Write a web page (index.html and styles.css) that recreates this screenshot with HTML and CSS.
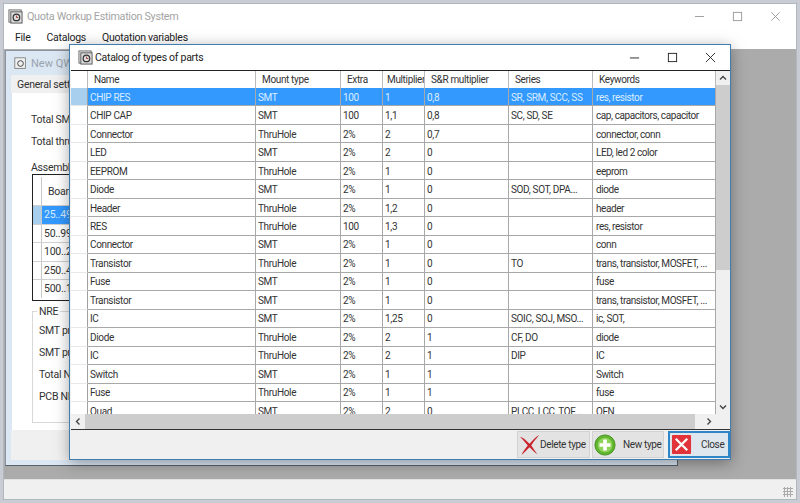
FILE: index.html
```html
<!DOCTYPE html>
<html lang="en">
<head>
<meta charset="utf-8">
<title>Catalog of types of parts</title>
<link rel="stylesheet" href="styles.css">
</head>
<body>
<div class="desktop">
  <section class="main-window">
    <header class="main-title">
      <svg class="app-icon" viewBox="0 0 16 16"><rect x="1" y="1" width="13" height="13" fill="#f0f0f0" stroke="#666"/><rect x="3" y="3" width="12" height="12" fill="#ddd" stroke="#555"/><circle cx="9" cy="9" r="3.5" fill="none" stroke="#333" stroke-width="1.3"/><path d="M9 7v2h2" fill="none" stroke="#a33"/></svg>
      <span class="main-title-text">Quota Workup Estimation System</span>
      <div class="caption-buttons faint">
        <svg viewBox="0 0 12 12"><path d="M1 6h10" stroke="#999" fill="none"/></svg>
        <svg viewBox="0 0 12 12"><rect x="1.5" y="1.5" width="9" height="9" stroke="#999" fill="none"/></svg>
        <svg viewBox="0 0 12 12"><path d="M1.5 1.5l9 9M10.5 1.5l-9 9" stroke="#999" fill="none"/></svg>
      </div>
    </header>
    <nav class="menu"><span>File</span><span>Catalogs</span><span>Quotation variables</span></nav>
    <div class="mdi">
      <section class="child-window">
        <div class="child-title">
          <svg class="app-icon small" viewBox="0 0 16 16"><rect x="1" y="1" width="13" height="13" fill="#f0f0f0" stroke="#777"/><circle cx="8" cy="8" r="3.5" fill="none" stroke="#444" stroke-width="1.2"/></svg>
          <span>New QW</span>
        </div>
        <div class="child-tabs"><span class="tab">General settings</span></div>
        <div class="child-body">
          <p class="field">Total SMT</p>
          <p class="field">Total thruhole</p>
          <p class="assembly">Assembly</p>
          <div class="mini-grid">
            <div class="mini-head"><i></i><span>Board</span></div>
            <div class="mini-row on"><i></i><span>25..49</span></div>
            <div class="mini-row"><i></i><span>50..99</span></div>
            <div class="mini-row"><i></i><span>100..2</span></div>
            <div class="mini-row"><i></i><span>250..4</span></div>
            <div class="mini-row"><i></i><span>500..1</span></div>
          </div>
          <fieldset class="nre">
            <legend>NRE</legend>
            <p>SMT pro</p>
            <p>SMT pro</p>
            <p>Total N</p>
            <p>PCB NR</p>
          </fieldset>
        </div>
        <div class="child-foot"><span class="ghost-btn"></span><span class="ghost-btn"></span></div>
      </section>
    </div>
    <footer class="status"><span class="grip"></span></footer>
  </section>

  <section class="dialog">
    <header class="dialog-title">
      <svg class="app-icon" viewBox="0 0 16 16"><rect x="1" y="1" width="13" height="13" fill="#f0f0f0" stroke="#666"/><rect x="3" y="3" width="12" height="12" fill="#ddd" stroke="#555"/><circle cx="9" cy="9" r="3.5" fill="none" stroke="#333" stroke-width="1.3"/><path d="M9 7v2h2" fill="none" stroke="#a33"/></svg>
      <span class="dialog-title-text">Catalog of types of parts</span>
      <div class="caption-buttons">
        <svg viewBox="0 0 12 12"><path d="M1 6.5h10" stroke="#222" fill="none"/></svg>
        <svg viewBox="0 0 12 12"><rect x="1.5" y="1.5" width="9" height="9" stroke="#222" fill="none"/></svg>
        <svg viewBox="0 0 12 12"><path d="M1 1l10 10M11 1L1 11" stroke="#222" fill="none"/></svg>
      </div>
    </header>
    <div class="grid-area">
      <div class="grid-main">
        <div class="grid-scroll">
          <table class="parts">
            <colgroup><col class="c0"><col class="c1"><col class="c2"><col class="c3"><col class="c4"><col class="c5"><col class="c6"><col class="c7"></colgroup>
            <thead><tr><th></th><th>Name</th><th>Mount type</th><th>Extra</th><th class="tight">Multiplier</th><th>S&amp;R multiplier</th><th>Series</th><th>Keywords</th></tr></thead>
            <tbody>
              <tr class="selected"><th></th><td>CHIP RES</td><td>SMT</td><td>100</td><td>1</td><td>0,8</td><td>SR, SRM, SCC, SS</td><td class="kw">res, resistor</td></tr>
              <tr><th></th><td>CHIP CAP</td><td>SMT</td><td>100</td><td>1,1</td><td>0,8</td><td>SC, SD, SE</td><td class="kw">cap, capacitors, capacitor</td></tr>
              <tr><th></th><td>Connector</td><td>ThruHole</td><td>2%</td><td>2</td><td>0,7</td><td></td><td class="kw">connector, conn</td></tr>
              <tr><th></th><td>LED</td><td>SMT</td><td>2%</td><td>2</td><td>0</td><td></td><td class="kw">LED, led 2 color</td></tr>
              <tr><th></th><td>EEPROM</td><td>ThruHole</td><td>2%</td><td>1</td><td>0</td><td></td><td class="kw">eeprom</td></tr>
              <tr><th></th><td>Diode</td><td>SMT</td><td>2%</td><td>1</td><td>0</td><td>SOD, SOT, DPA...</td><td class="kw">diode</td></tr>
              <tr><th></th><td>Header</td><td>ThruHole</td><td>2%</td><td>1,2</td><td>0</td><td></td><td class="kw">header</td></tr>
              <tr><th></th><td>RES</td><td>ThruHole</td><td>100</td><td>1,3</td><td>0</td><td></td><td class="kw">res, resistor</td></tr>
              <tr><th></th><td>Connector</td><td>SMT</td><td>2%</td><td>1</td><td>0</td><td></td><td class="kw">conn</td></tr>
              <tr><th></th><td>Transistor</td><td>ThruHole</td><td>2%</td><td>1</td><td>0</td><td>TO</td><td class="kw">trans, transistor, MOSFET, ...</td></tr>
              <tr><th></th><td>Fuse</td><td>SMT</td><td>2%</td><td>1</td><td>0</td><td></td><td class="kw">fuse</td></tr>
              <tr><th></th><td>Transistor</td><td>SMT</td><td>2%</td><td>1</td><td>0</td><td></td><td class="kw">trans, transistor, MOSFET, ...</td></tr>
              <tr><th></th><td>IC</td><td>SMT</td><td>2%</td><td>1,25</td><td>0</td><td>SOIC, SOJ, MSO...</td><td class="kw">ic, SOT,</td></tr>
              <tr><th></th><td>Diode</td><td>ThruHole</td><td>2%</td><td>2</td><td>1</td><td>CF, DO</td><td class="kw">diode</td></tr>
              <tr><th></th><td>IC</td><td>ThruHole</td><td>2%</td><td>2</td><td>1</td><td>DIP</td><td class="kw">IC</td></tr>
              <tr><th></th><td>Switch</td><td>SMT</td><td>2%</td><td>1</td><td>1</td><td></td><td class="kw">Switch</td></tr>
              <tr><th></th><td>Fuse</td><td>ThruHole</td><td>2%</td><td>1</td><td>1</td><td></td><td class="kw">fuse</td></tr>
              <tr><th></th><td>Quad</td><td>SMT</td><td>2%</td><td>2</td><td>0</td><td>PLCC, LCC, TQF...</td><td class="kw">QFN</td></tr>
            </tbody>
          </table>
        </div>
        <div class="vbar">
          <svg viewBox="0 0 14 14"><path d="M4 8.5l3-3 3 3" fill="none" stroke="#444" stroke-width="1.4"/></svg>
          <div class="vtrack"><div class="vthumb"></div></div>
          <svg viewBox="0 0 14 14"><path d="M4 5.5l3 3 3-3" fill="none" stroke="#444" stroke-width="1.4"/></svg>
        </div>
      </div>
      <div class="hbar">
        <svg viewBox="0 0 14 14"><path d="M8.5 4l-3 3 3 3" fill="none" stroke="#444" stroke-width="1.4"/></svg>
        <div class="htrack"><div class="hthumb"></div></div>
        <svg viewBox="0 0 14 14"><path d="M5.5 4l3 3-3 3" fill="none" stroke="#444" stroke-width="1.4"/></svg>
        <div class="corner"></div>
      </div>
    </div>
    <footer class="actions">
      <button class="btn btn-delete" type="button">
        <svg viewBox="0 0 24 24"><path d="M1 3c4 1 8 5 11 8 3-3 7-8 11-10-3 4-7 8-9 12 2 3 5 7 7 10-3-2-7-6-9-8-3 3-6 6-9 9 1-4 5-8 7-11C8 10 4 6 1 3z" fill="#c9242c"/></svg>
        <span>Delete type</span>
      </button>
      <button class="btn btn-new" type="button">
        <svg viewBox="0 0 24 24"><circle cx="12" cy="12" r="11" fill="#62b52f" stroke="#3e8f1c"/><circle cx="12" cy="12" r="8" fill="#8ed35a"/><path d="M12 6v12M6 12h12" stroke="#fff" stroke-width="4"/></svg>
        <span>New type</span>
      </button>
      <button class="btn btn-close" type="button">
        <svg viewBox="0 0 22 22"><rect x="1" y="1" width="20" height="20" rx="1" fill="#e0343a"/><path d="M5 5l12 12M17 5L5 17" stroke="#fff" stroke-width="2.4"/></svg>
        <span>Close</span>
      </button>
    </footer>
  </section>
</div>
</body>
</html>
```
FILE: styles.css
```css
* { box-sizing: border-box; }
html, body { margin: 0; padding: 0; }
body {
  width: 800px;
  height: 503px;
  overflow: hidden;
  font-family: Roboto, "Liberation Sans", sans-serif;
  font-size: 10.5px;
  color: #333;
  background: #c9ccd2;
}
.desktop { position: relative; width: 800px; height: 503px; }

/* main window */
.main-window {
  position: absolute;
  left: 3px; top: 3px;
  width: 794px; height: 497px;
  display: flex;
  flex-direction: column;
  background: #fff;
  border: 1px solid #aeb7c2;
}
.main-title {
  height: 24px;
  display: flex;
  align-items: center;
  padding-left: 4px;
  flex: none;
}
.app-icon { width: 15px; height: 15px; flex: none; }
.app-icon.small { width: 13px; height: 13px; }
.main-title-text { margin-left: 4px; font-size: 10.8px; color: #a4a4a4; letter-spacing: -.32px; }
.caption-buttons {
  margin-left: auto;
  display: flex;
  gap: 27px;
  padding-right: 15px;
}
.caption-buttons svg { width: 11px; height: 11px; display: block; }
.menu {
  height: 21px;
  flex: none;
  display: flex;
  align-items: flex-start;
  gap: 16px;
  padding: 3px 0 0 11px;
  font-size: 10.5px;
  letter-spacing: -.25px;
  color: #222;
}
.mdi {
  flex: 1;
  background: #ababab;
  position: relative;
  min-height: 0;
}
.status {
  height: 20px;
  flex: none;
  background: #f0f0f0;
  border-top: 1px solid #e2e2e2;
  display: flex;
  justify-content: flex-end;
  align-items: flex-end;
  padding: 0 3px 2px 0;
}
.grip {
  width: 10px; height: 10px;
  background: radial-gradient(circle, #aaa 1px, transparent 1.2px) 0 0 / 3px 3px;
}

/* child window behind the dialog */
.child-window {
  position: absolute;
  left: 1px; top: 1px;
  width: 673px; height: 416px;
  background: #dbe7f3;
  border: 1px solid #59616b;
  border-left-color: #8a949f;
  border-top-color: #8a949f;
  display: flex;
  flex-direction: column;
  padding: 0 5px 5px;
}
.child-title {
  height: 24px;
  display: flex;
  align-items: center;
  gap: 4px;
  padding-left: 3px;
  color: #9aa4ae;
  font-size: 11px;
  flex: none;
}
.child-tabs { height: 18px; flex: none; background: #f0f0f0; padding: 3px 0 0 6px; color: #333; letter-spacing: -.25px; white-space: nowrap; }
.child-body {
  flex: 1;
  background: #fff;
  margin-left: 1px;
  padding-left: 19px;
  position: relative;
  letter-spacing: -.25px;
  white-space: nowrap;
}
.field { margin: 0; height: 22px; line-height: 22px; }
.field:first-child { margin-top: 16px; }
.assembly { margin: 8px 0 0; height: 13px; line-height: 13px; }
.mini-grid {
  width: 60px;
  margin-left: 1px;
  height: 127px;
  border: 1px solid #222;
  display: flex;
  flex-direction: column;
}
.mini-head { height: 30px; display: flex; align-items: center; flex: none; padding-top: 2px; }
.mini-row { height: 18.5px; display: flex; align-items: center; border-top: 1px solid #d0d0d0; flex: none; }
.mini-head i, .mini-row i { width: 9px; align-self: stretch; border-right: 1px solid #c8c8c8; flex: none; }
.mini-head span { padding-left: 6px; }
.mini-row span { padding-left: 2px; }
.mini-row.on span { background: #3399ff; color: #d8ecff; align-self: stretch; flex: 1; display: flex; align-items: center; }
.mini-row.on i { background: #a9cfee; }
.nre {
  width: 60px;
  height: 118px;
  margin: 4px 0 0 1px;
  padding: 2px 0 0 6px;
  border: 1px solid #d8d8d8;
  border-right: 0;
  min-inline-size: 0;
}
.nre legend { padding: 0 2px; font-size: 10.5px; margin-left: -2px; }
.nre p { margin: 0; height: 22px; line-height: 22px; font-size: 10.5px; white-space: nowrap; }
.child-foot {
  height: 30px;
  background: #f0f0f0;
  flex: none;
  display: flex;
  justify-content: flex-end;
  align-items: flex-end;
  gap: 1px;
  padding: 0 7px 4px 0;
}
.ghost-btn { width: 55px; height: 4px; background: #ccc; border-bottom: 1px solid #aaa; }

/* dialog */
.dialog {
  position: absolute;
  left: 69px; top: 44px;
  width: 662px; height: 416px;
  background: #f0f0f0;
  border: 1px solid #3f7db0;
  box-shadow: 0 3px 14px rgba(0, 0, 0, .35);
  display: flex;
  flex-direction: column;
}
.dialog-title {
  height: 25px;
  flex: none;
  background: #fff;
  display: flex;
  align-items: center;
  padding-left: 8px;
}
.dialog-title-text { margin-left: 2px; font-size: 10.5px; color: #222; letter-spacing: -.28px; }
.dialog .caption-buttons { gap: 27px; padding-right: 14px; }
.grid-area {
  flex: none;
  height: 360px;
  margin: 0 0 0 1px;
  background: #fff;
  border-top: 1px solid #222;
  border-bottom: 1px solid #333;
  display: flex;
  flex-direction: column;
}
.grid-main { flex: 1; min-height: 0; display: flex; }
.grid-scroll { flex: 1; min-width: 0; overflow: hidden; }
.parts {
  table-layout: fixed;
  border-collapse: separate;
  border-spacing: 0;
  width: 645px;
  font-size: 10px;
  letter-spacing: -.35px;
}
.c0 { width: 17px; }
.c1 { width: 168px; }
.c2 { width: 85px; }
.c3 { width: 42px; }
.c4 { width: 42px; }
.c5 { width: 84px; }
.c6 { width: 84px; }
.c7 { width: 123px; }
.parts thead th {
  height: 17px;
  font-weight: 400;
  text-align: left;
  padding: 0 0 0 6px;
  border-right: 1px solid #bbb;
  color: #333;
  white-space: nowrap;
  overflow: hidden;
}
.parts thead th.tight { padding-left: 4px; }
.parts tbody tr { height: 18.47px; }
.parts tbody th {
  background: #fff;
  border-right: 1px solid #a0a0a0;
  border-bottom: 1px solid #e8e8e8;
  padding: 0;
}
.parts td {
  padding: 2px 0 0 2px;
  border-right: 1px solid #a8a8a8;
  border-bottom: 1px solid #a8a8a8;
  white-space: nowrap;
  overflow: hidden;
  color: #333;
  line-height: 14px;
}
.parts td.kw { letter-spacing: -.42px; padding-left: 3px; }
.parts .selected td { background: #3399ff; color: #d9edff; }
.parts .selected th { background: #a9cfee; }
.vbar { width: 14px; flex: none; background: #f0f0f0; display: flex; flex-direction: column; }
.vbar svg { width: 14px; height: 14px; flex: none; }
.vtrack { flex: 1; background: #f0f0f0; }
.vthumb { height: 185px; background: #cdcdcd; }
.hbar { height: 15px; flex: none; display: flex; background: #f0f0f0; }
.hbar svg { width: 14px; height: 15px; flex: none; }
.htrack { flex: 1; background: #f0f0f0; }
.hthumb { width: 610px; height: 100%; background: #cdcdcd; }
.corner { width: 14px; flex: none; background: #f0f0f0; }
.actions {
  flex: 1;
  display: flex;
  justify-content: flex-end;
  align-items: flex-start;
  gap: 2px;
  padding: 1px 0 0 0;
}
.btn {
  height: 27px;
  border: 1px solid #d2d2d2;
  background: #e3e3e3;
  font-family: inherit;
  font-size: 10px;
  letter-spacing: -.35px;
  color: #333;
  display: flex;
  align-items: center;
  padding: 0 1px;
  white-space: nowrap;
}
.btn-delete { width: 73px; gap: 0; }
.btn-delete svg { width: 21px; height: 23px; flex: none; }
.btn-new { width: 72px; gap: 7px; }
.btn-new svg { width: 22px; height: 22px; flex: none; }
.btn-close {
  width: 62px;
  gap: 9px;
  border: 2px solid #2f86c6;
  background: #dfe7ee;
  padding: 0 1px;
  margin-left: 2px;
}
.btn-close svg { width: 21px; height: 21px; flex: none; }
```
